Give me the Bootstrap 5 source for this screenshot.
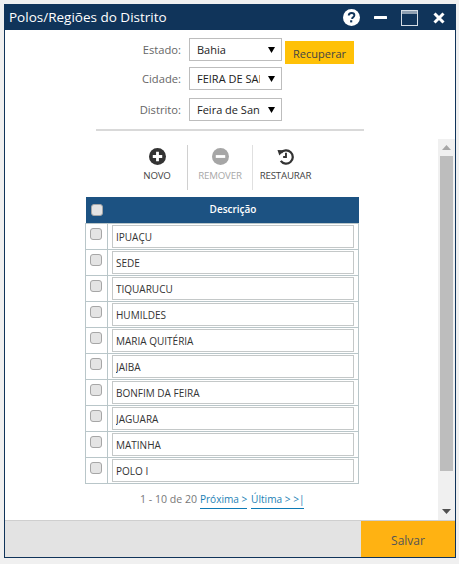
<!DOCTYPE html>
<html lang="pt">
<head>
<meta charset="utf-8">
<title>Polos/Regiões do Distrito</title>
<link rel="stylesheet" href="https://cdn.jsdelivr.net/npm/bootstrap@5.3.0/dist/css/bootstrap.min.css">
<style>
html, body { height: 564px; overflow: hidden; }
body { background: #f0f0f0; font-family: "Open Sans", "Liberation Sans", sans-serif; font-size: 11px; color: #444; padding: 4px 4px 6px; }
.janela { width: 452px; height: 554px; border: 1px solid #10345a; background: #fff; }
.cabeca { height: 25px; flex: none; background: #10345a; color: #fff; font-size: 13.5px; padding-left: 4px; padding-right: 10px; }
.cabeca-icones { gap: 14px; }
.icone-fechar { margin-left: 1px; }
.miolo { min-height: 0; }
.conteudo { min-width: 0; padding-top: 8px; }
.rolagem { width: 17px; flex: none; background: #f0f0f0; margin-top: 109px; }
.seta { height: 17px; flex: none; }
.trilho { min-height: 0; padding: 0 2px; }
.polegar { height: 315px; background: #bdbdbd; }
.linha-campo { height: 23px; }
.linha-b { margin-top: 6px; }
.linha-c { margin-top: 8px; }
.rotulo-campo { width: 176px; text-align: right; font-size: 11.2px; line-height: 23px; color: #666; }
select.seletor { width: 93px; height: 23px; margin-left: 8px; padding: 0 21px 0 7px; border: 1px solid #bdbdbd; border-radius: 0; font-size: 11px; color: #222; line-height: 1; background-position: right 6px top 8px; background-size: 7px 6px; background-image: url("data:image/svg+xml,%3Csvg xmlns='http://www.w3.org/2000/svg' viewBox='0 0 7 6' preserveAspectRatio='none'%3E%3Cpath d='M0 0h7L3.5 6z' fill='%23000'/%3E%3C/svg%3E"); box-shadow: none; }
.botao-recuperar { width: 69px; height: 23px; margin-left: 3px; margin-top: 3px; padding: 3px 0 0; background: #ffc107; border: 0; border-radius: 0; font-size: 11px; color: #444; }
.regua { width: 268px; height: 2px; background: #d9d9d9; margin: 8px 0 0 91px; }
.barra-acoes { height: 45px; margin-top: 14px; padding-left: 122px; }
.acao { color: #444; font-size: 9.7px; line-height: 1; letter-spacing: -.2px; white-space: nowrap; padding-top: 3px; }
.acao svg { display: block; margin-bottom: 6px; }
.acao-novo { width: 60px; }
.acao-remover { width: 65px; border-left: 1px solid #d0d0d0; color: #a8a8a8; }
.acao-restaurar { width: 66px; border-left: 1px solid #e0e0e0; }
.grade { width: 274px; margin: 7px 0 0 80px; border-collapse: collapse; --bs-table-bg: transparent; }
.grade th { height: 26px; padding: 0; background: #1c5282; color: #fff; font-size: 10px; font-weight: 600; text-align: center; border: 0; vertical-align: middle; }
.grade td { height: 26px; padding: 0; border: 1px solid #b9c6c9; vertical-align: middle; }
.cel-marca { width: 22px; }
.marca { display: block; width: 12px; height: 12px; margin: 0 0 5px 4px; background: #e4e4e4; border: 1px solid #a6a6a6; border-radius: 3px; }
.grade th .marca { margin: 0 0 0 5px; }
input.campo-texto { display: block; width: 242px; height: 23px; margin: 0 0 0 4px; padding: 2px 3px 0; border: 1px solid #c4c8c8; border-radius: 0; font-size: 10px; color: #333; box-shadow: none; }
.paginacao { margin: 8px 0 0 135px; font-size: 10.6px; line-height: 14px; color: #777; white-space: nowrap; }
.paginacao a { display: inline-block; font-size: 10.1px; color: #1c7fb5; text-decoration: none; border-bottom: 1px solid #0d7ab5; padding-bottom: 2px; margin-right: 1px; }
.rodape { height: 37px; flex: none; background: #e3e3e3; border-top: 1px solid #cfcfcf; }
.botao-salvar { width: 94px; padding: 3px 0 0; background: #ffb212; border: 0; border-radius: 0; font-size: 12px; color: #555; }
</style>
</head>
<body>
<div class="janela d-flex flex-column">
  <div class="cabeca d-flex align-items-center justify-content-between">
    <span>Polos/Regiões do Distrito</span>
    <div class="cabeca-icones d-flex align-items-center">
      <svg width="17" height="17" viewBox="0 0 16 16" aria-label="Ajuda"><circle cx="8" cy="8" r="8" fill="#fff"/><path d="M5.4 6.2C5.4 4.6 6.6 3.7 8.1 3.7c1.5 0 2.6.9 2.6 2.2 0 1-.6 1.5-1.3 2-.6.4-.8.7-.8 1.4" fill="none" stroke="#10345a" stroke-width="1.8"/><rect x="6.7" y="10.6" width="2" height="2" fill="#10345a"/></svg>
      <svg width="13" height="16" viewBox="0 0 13 16" aria-label="Minimizar"><rect y="6" width="13" height="3" rx=".5" fill="#fff"/></svg>
      <svg width="17" height="16" viewBox="0 0 17 16" aria-label="Maximizar"><rect x=".5" y=".5" width="16" height="15" fill="none" stroke="#d5dde5"/><rect x="1" y="1" width="15" height="3" fill="#8fa0b2"/></svg>
      <svg class="icone-fechar" width="12" height="16" viewBox="0 0 12 16" aria-label="Fechar"><path d="M1.5 3.5l9 9M10.5 3.5l-9 9" stroke="#fff" stroke-width="3"/></svg>
    </div>
  </div>
  <div class="miolo flex-grow-1 d-flex">
    <div class="conteudo flex-grow-1">
      <div class="linha-campo d-flex align-items-start">
        <label class="rotulo-campo">Estado:</label>
        <select class="seletor form-select"><option>Bahia</option></select>
        <button class="botao-recuperar btn">Recuperar</button>
      </div>
      <div class="linha-campo linha-b d-flex align-items-start">
        <label class="rotulo-campo">Cidade:</label>
        <select class="seletor form-select"><option>FEIRA DE SANTANA</option></select>
      </div>
      <div class="linha-campo linha-c d-flex align-items-start">
        <label class="rotulo-campo">Distrito:</label>
        <select class="seletor form-select"><option>Feira de Santana</option></select>
      </div>
      <div class="regua"></div>
      <div class="barra-acoes d-flex">
        <div class="acao acao-novo d-flex flex-column align-items-center">
          <svg width="17" height="17" viewBox="0 0 18 18"><circle cx="9" cy="9" r="9" fill="#333"/><path d="M9 4v10M4 9h10" stroke="#fff" stroke-width="3"/></svg>
          <span>NOVO</span>
        </div>
        <div class="acao acao-remover d-flex flex-column align-items-center">
          <svg width="17" height="17" viewBox="0 0 18 18"><circle cx="9" cy="9" r="9" fill="#a6a6a6"/><path d="M4 9h10" stroke="#fff" stroke-width="3"/></svg>
          <span>REMOVER</span>
        </div>
        <div class="acao acao-restaurar d-flex flex-column align-items-center">
          <svg width="17" height="17" viewBox="0 0 18 18"><path d="M4.2 5.2A7 7 0 1 1 4 13.6" fill="none" stroke="#333" stroke-width="2.4"/><path d="M0.5 2l7 0.5L2.5 8z" fill="#333"/><path d="M9.5 5v4.6H6.5" fill="none" stroke="#333" stroke-width="2"/></svg>
          <span>RESTAURAR</span>
        </div>
      </div>
      <table class="grade table mb-0">
        <thead><tr><th class="cel-marca"><span class="marca"></span></th><th>Descrição</th></tr></thead>
        <tbody>
          <tr><td class="cel-marca"><span class="marca"></span></td><td><input class="campo-texto form-control" value="IPUAÇU"></td></tr>
          <tr><td class="cel-marca"><span class="marca"></span></td><td><input class="campo-texto form-control" value="SEDE"></td></tr>
          <tr><td class="cel-marca"><span class="marca"></span></td><td><input class="campo-texto form-control" value="TIQUARUCU"></td></tr>
          <tr><td class="cel-marca"><span class="marca"></span></td><td><input class="campo-texto form-control" value="HUMILDES"></td></tr>
          <tr><td class="cel-marca"><span class="marca"></span></td><td><input class="campo-texto form-control" value="MARIA QUITÉRIA"></td></tr>
          <tr><td class="cel-marca"><span class="marca"></span></td><td><input class="campo-texto form-control" value="JAIBA"></td></tr>
          <tr><td class="cel-marca"><span class="marca"></span></td><td><input class="campo-texto form-control" value="BONFIM DA FEIRA"></td></tr>
          <tr><td class="cel-marca"><span class="marca"></span></td><td><input class="campo-texto form-control" value="JAGUARA"></td></tr>
          <tr><td class="cel-marca"><span class="marca"></span></td><td><input class="campo-texto form-control" value="MATINHA"></td></tr>
          <tr><td class="cel-marca"><span class="marca"></span></td><td><input class="campo-texto form-control" value="POLO I"></td></tr>
        </tbody>
      </table>
      <div class="paginacao">1 - 10 de 20 <a href="#">Próxima &gt; </a> <a href="#">Última &gt; &gt;|</a></div>
    </div>
    <div class="rolagem d-flex flex-column">
      <div class="seta d-flex align-items-center justify-content-center"><svg width="9" height="5" viewBox="0 0 9 5"><path d="M4.5 0L9 5H0z" fill="#a6a6a6"/></svg></div>
      <div class="trilho flex-grow-1"><div class="polegar"></div></div>
      <div class="seta d-flex align-items-center justify-content-center"><svg width="9" height="5" viewBox="0 0 9 5"><path d="M0 0h9L4.5 5z" fill="#505050"/></svg></div>
    </div>
  </div>
  <div class="rodape d-flex justify-content-end">
    <button class="botao-salvar btn">Salvar</button>
  </div>
</div>
</body>
</html>
